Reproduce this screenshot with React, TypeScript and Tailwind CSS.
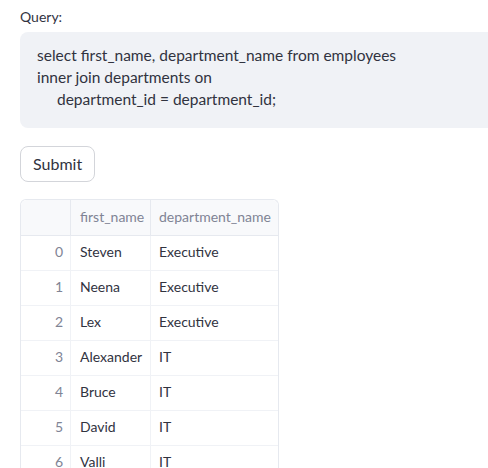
const rows: [number, string, string][] = [
  [0, "Steven", "Executive"],
  [1, "Neena", "Executive"],
  [2, "Lex", "Executive"],
  [3, "Alexander", "IT"],
  [4, "Bruce", "IT"],
  [5, "David", "IT"],
  [6, "Valli", "IT"],
  [7, "Diana", "IT"],
];

export default function App() {
  return (
    <div className="w-[488px] h-[468px] overflow-hidden bg-white text-[#31333f] font-['Lato',sans-serif]">
      <div className="pl-5 pt-[7px]">
        <div className="text-[14px] leading-[20px] mb-[5px]">Query:</div>
        <div className="bg-[#f0f2f6] rounded-l-lg w-[600px] h-[96px] pl-[17px] pt-[12px] text-[15.5px] leading-[22px]">
          <div>select first_name, department_name from employees</div>
          <div>inner join departments on</div>
          <div className="pl-5">department_id = department_id;</div>
        </div>
        <button className="mt-[18px] h-[36px] px-3 pb-[1px] rounded-lg border border-[#d3d5da] bg-white text-[16px]">
          Submit
        </button>
        <div className="mt-[17px] w-[259px] border border-[#e6e9ef] rounded-t-md border-b-0 text-[14px]">
          <div className="flex h-[36px] bg-[#f8f9fb] text-[#808495] border-b border-[#e6e9ef] rounded-t-md">
            <div className="w-[50px] border-r border-[#e6e9ef]" />
            <div className="w-[80px] border-r border-[#e6e9ef] flex items-center pl-[9px] pb-[2px]">first_name</div>
            <div className="flex-1 flex items-center pl-[8px] pb-[2px]">department_name</div>
          </div>
          {rows.map(([i, name, dept]) => (
            <div key={i} className="flex h-[35px] border-b border-[#f0f2f6]">
              <div className="w-[50px] border-r border-[#f0f2f6] flex items-center justify-end pr-[7px] pb-[3px] text-[#808495]">{i}</div>
              <div className="w-[80px] border-r border-[#f0f2f6] flex items-center pl-[9px] pb-[3px]">{name}</div>
              <div className="flex-1 flex items-center pl-[8px] pb-[3px]">{dept}</div>
            </div>
          ))}
        </div>
      </div>
    </div>
  );
}
